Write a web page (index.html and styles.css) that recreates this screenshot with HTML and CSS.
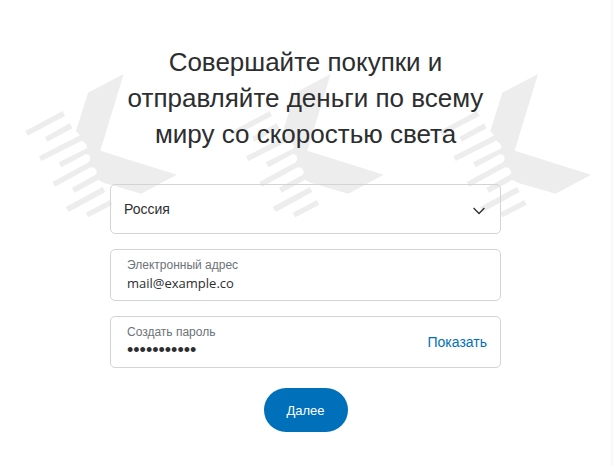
FILE: index.html
```html
<!DOCTYPE html>
<html lang="ru">
<head>
<meta charset="utf-8">
<meta name="viewport" content="width=device-width, initial-scale=1">
<title>Регистрация</title>
<link rel="stylesheet" href="styles.css">
</head>
<body>
<main class="page">
  <form class="signup">
    <svg class="marks" width="566" height="145" viewBox="75 101 1698 435" aria-hidden="true">
      <defs>
        <g id="mark">
          <path d="M371 101 264 157 228 272 240 285 117 348 124 362 245 301Q258 306 262 320L258 325 176 366 184 381 258 341 268 345 271 357 266 366 157 425 165 439 272 381 284 382 291 396 287 403 216 442 224 457 295 418 310 427 424 460 530 403 301 331Z"/>
          <path d="M76 272 188 212 195 227 83 286ZM135 290 209 249 217 264 142 304ZM197 500 308 440 316 455 206 515ZM257 517 330 479 337 493 265 531Z"/>
        </g>
      </defs>
      <use href="#mark"/>
      <use href="#mark" x="621"/>
      <use href="#mark" x="1243"/>
    </svg>
    <h1 class="title">Совершайте покупки и отправляйте деньги по всему миру со скоростью света</h1>
    <div class="field field-country">
      <select class="country" aria-label="Страна">
        <option>Россия</option>
      </select>
      <svg class="chevron" width="12" height="8" viewBox="0 0 12 8" aria-hidden="true"><path d="M.6 1 6 6.500 11.400 1"/></svg>
    </div>
    <div class="field">
      <div class="entry">
        <label class="label" for="email">Электронный адрес</label>
        <input class="input" id="email" type="text" value="mail@example.co">
      </div>
    </div>
    <div class="field">
      <div class="entry">
        <label class="label" for="password">Создать пароль</label>
        <input class="input input-password" id="password" type="password" value="password123">
      </div>
      <button class="reveal" type="button">Показать</button>
    </div>
    <button class="next" type="button">Далее</button>
  </form>
</main>
</body>
</html>
```
FILE: styles.css
```css
* {
  box-sizing: border-box;
}

body {
  margin: 0;
  background: #fff;
  color: #2c2e2f;
  font-family: "Liberation Sans", Arial, sans-serif;
}

.page {
  min-height: 100vh;
  padding: 44px 16px 32px;
  border-right: 2px solid #f7f8fd;
}

.signup {
  position: relative;
  z-index: 0;
  display: flex;
  flex-direction: column;
  align-items: center;
  gap: 15px;
  max-width: 391px;
  margin: 0 auto;
}

/* Decorative row of marks behind the heading and the first field */
.marks {
  position: absolute;
  z-index: -1;
  top: 30px;
  left: 50%;
  margin-left: -281px;
  fill: #ededed;
}

.title {
  margin: 0 0 17px;
  font-size: 26px;
  font-weight: 400;
  line-height: 36px;
  text-align: center;
}

.field {
  position: relative;
  display: flex;
  align-items: center;
  width: 100%;
  height: 52px;
  padding: 0 13px 0 16px;
  border: 1px solid #d0d5d8;
  border-radius: 5px;
}

.field-country {
  height: 50px;
  padding: 0;
}

.country {
  width: 100%;
  height: 100%;
  padding: 0 13px;
  border: 0;
  appearance: none;
  background: none;
  color: inherit;
  font: 14px "Liberation Sans", Arial, sans-serif;
}

.chevron {
  position: absolute;
  right: 15px;
  top: 22px;
  fill: none;
  stroke: #2c2e2f;
  stroke-width: 1.3;
  pointer-events: none;
}

.entry {
  display: flex;
  flex: 1;
  flex-direction: column;
  min-width: 0;
}

.label {
  color: #6c7378;
  font-size: 12px;
  line-height: 16px;
}

.input {
  width: 100%;
  height: 20px;
  padding: 0;
  border: 0;
  outline: 0;
  background: none;
  color: inherit;
  font: 13px "Open Sans", sans-serif;
}

.input-password {
  font: 18px "Liberation Sans", Arial, sans-serif;
}

.reveal {
  padding: 0;
  border: 0;
  background: none;
  color: #0070ba;
  font: 14px "Liberation Sans", Arial, sans-serif;
}

.next {
  min-width: 84px;
  height: 44px;
  margin-top: 5px;
  padding: 0 22px;
  border: 0;
  border-radius: 22px;
  background: #0070ba;
  color: #fff;
  font: 13px "Liberation Sans", Arial, sans-serif;
}
```
